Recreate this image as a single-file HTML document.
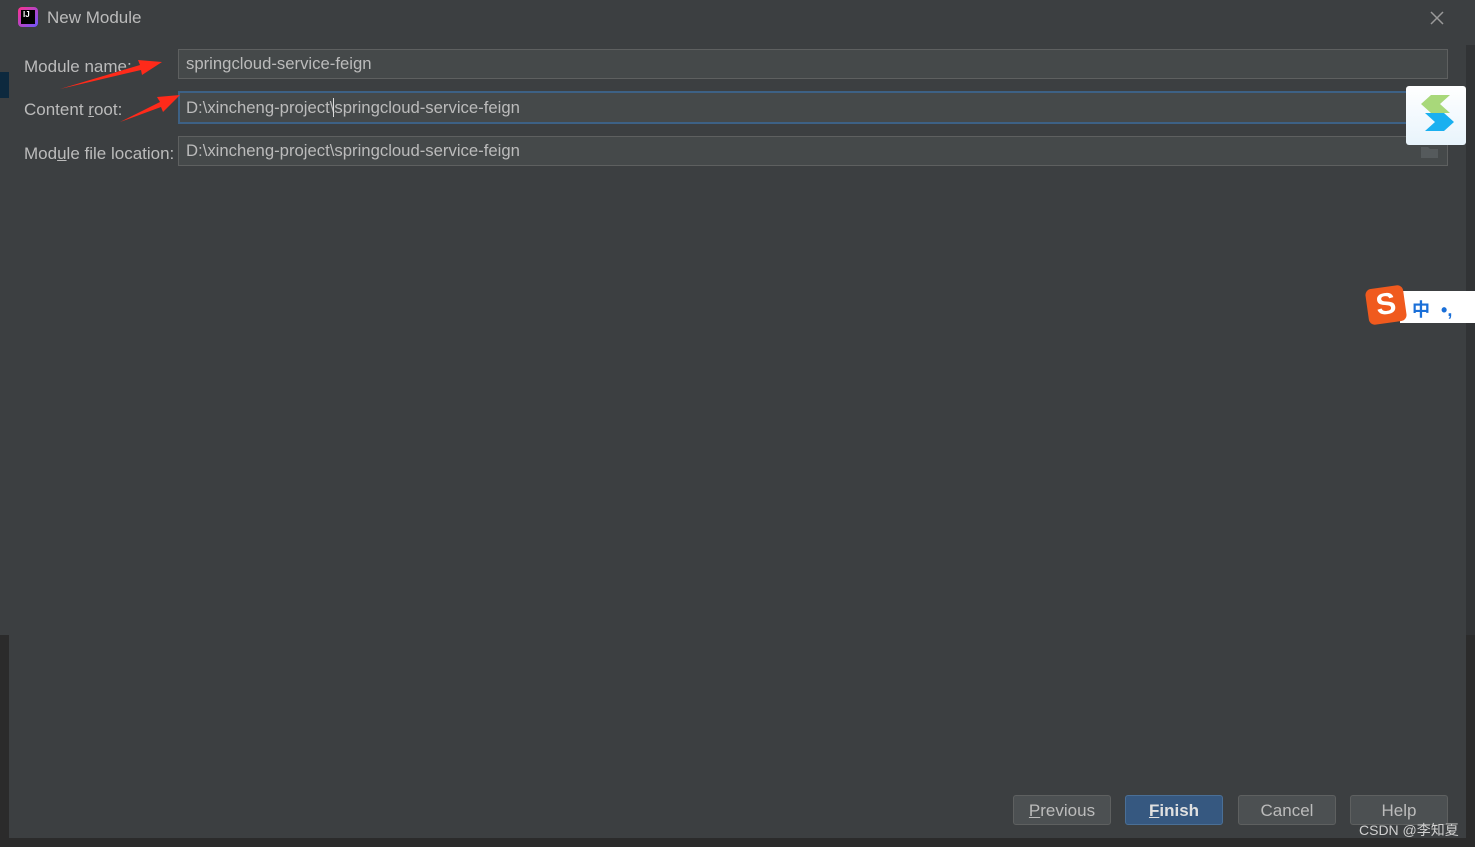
<!DOCTYPE html>
<html><head><meta charset="utf-8"><style>
*{margin:0;padding:0;box-sizing:border-box}
body{width:1475px;height:847px;overflow:hidden;background:#2b2b2b;position:relative;font-family:"Liberation Sans","Noto Sans CJK SC",sans-serif;color:#bbbbbb}
.abs{position:absolute}
.dlg{left:9px;top:0;width:1457px;height:838px;background:#3c3f41}
.lbl{font-size:17px;color:#bbbbbb}
.fld{left:178px;width:1270px;height:30px;background:#45494a;border:1px solid #5e6060;font-size:16.7px;padding-left:7px;line-height:27px;color:#bbbbbb}
.btn{top:795px;width:98px;height:30px;border:1px solid #5e6060;border-radius:3px;background:#4c5052;font-size:17px;text-align:center;line-height:29px;color:#bbbbbb}
u{text-decoration:underline}
</style></head><body>
<div class="abs" style="left:0;top:0;width:9px;height:635px;background:#3c3f41"></div>
<div class="abs" style="left:0;top:72px;width:9px;height:26px;background:#0d293e"></div>
<div class="abs" style="left:1466px;top:0;width:9px;height:635px;background:#3c3f41"></div>
<div class="abs" style="left:1466px;top:45px;width:9px;height:590px;background:#313335"></div>
<div class="abs dlg"></div>
<div class="abs" style="left:18px;top:7px;width:20px;height:20px;border-radius:4px;background:linear-gradient(135deg,#ff318c,#6b57ff)"></div>
<div class="abs" style="left:21px;top:10px;width:14px;height:14px;background:#000;color:#fff;font-size:8px;font-weight:bold;line-height:9px;padding-left:2px">IJ</div>
<div class="abs" style="left:47px;top:8px;font-size:17px;color:#bbbbbb">New Module</div>
<svg class="abs" style="left:1429px;top:10px" width="16" height="16"><path d="M2 2L14 14M14 2L2 14" stroke="#9a9a9a" stroke-width="1.5"/></svg>
<div class="abs lbl" style="left:24px;top:57px">Module name:</div>
<div class="abs lbl" style="left:24px;top:100px">Content <u>r</u>oot:</div>
<div class="abs lbl" style="left:24px;top:144px">Mod<u>u</u>le file location:</div>
<div class="abs fld" style="top:49px">springcloud-service-feign</div>
<div class="abs fld" style="top:91px;height:33px;border:2px solid #3d6185;line-height:29px;padding-left:6px">D:\xincheng-project\<span style="border-left:1px solid #ddd;margin-left:-1px"></span>springcloud-service-feign</div>
<div class="abs fld" style="top:136px">D:\xincheng-project\springcloud-service-feign</div>
<svg class="abs" style="left:1420px;top:143px" width="20" height="16"><path d="M1 4h7l2 2h8v9H1z" fill="#555a5c"/></svg>
<svg class="abs" style="left:0;top:0" width="200" height="130">
<polygon points="60,89 140,65 138,60 162,62 142,75 141,70" fill="#ff2a1a"/>
<polygon points="120,122 160,102 157,97 180,95 163,112 161,107" fill="#ff2a1a"/>
</svg>
<div class="abs" style="left:1406px;top:86px;width:60px;height:59px;background:linear-gradient(#fff,#e8f4fc);border-radius:3px"></div>
<svg class="abs" style="left:1406px;top:86px" width="60" height="59">
<polygon points="15,18 25,9 44,9 34,18 44,27 25,27" fill="#a8d87a"/>
<polygon points="19,27 38,27 48,36 38,45 19,45 29,36" fill="#1ab0f0"/>
</svg>
<div class="abs" style="left:1400px;top:291px;width:75px;height:32px;background:#fff"></div>
<div class="abs" style="left:1367px;top:287px;width:38px;height:36px;background:#f05a1e;border-radius:6px;transform:rotate(-8deg);color:#fff;font-weight:bold;font-size:30px;line-height:36px;text-align:center">S</div>
<div class="abs" style="left:1412px;top:296px;font-size:18px;color:#1a6fd8;font-weight:bold">中 <span style="margin-left:6px">•,</span></div>
<div class="abs btn" style="left:1013px"><u>P</u>revious</div>
<div class="abs btn" style="left:1125px;background:#365880;border-color:#4a6f96;color:#e0e0e0;font-weight:bold"><u>F</u>inish</div>
<div class="abs btn" style="left:1238px">Cancel</div>
<div class="abs btn" style="left:1350px">Help</div>
<div class="abs" style="left:1359px;top:820px;font-size:14px;color:#d0d0d0">CSDN @李知夏</div>
</body></html>
